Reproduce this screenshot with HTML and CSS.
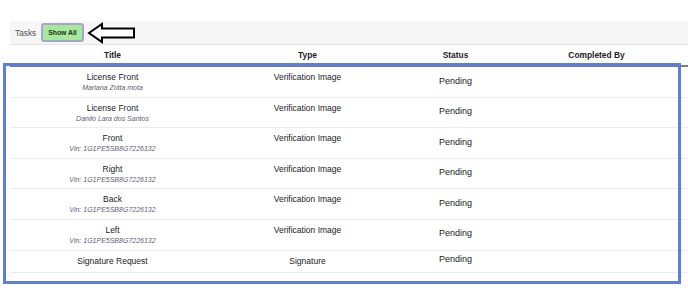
FILE: index.html
```html
<!DOCTYPE html>
<html lang="en">
<head>
  <meta charset="UTF-8" />
  <title>Tasks</title>
  <link rel="stylesheet" href="styles.css">
</head>
<body>
  <div class="page">
    <div class="toolbar">
      <span class="toolbar-label">Tasks</span>
      <button class="show-all">Show All</button>
      <svg class="arrow" width="49" height="22" viewBox="0 0 49 22">
        <path d="M2 11 L15 2 L15 6.5 L47 6.5 L47 15.5 L15 15.5 L15 20 Z" fill="#fff" stroke="#000" stroke-width="2" stroke-linejoin="miter" />
      </svg>
    </div>

    <table class="tasks">
      <colgroup>
        <col class="col-title">
        <col class="col-type">
        <col class="col-status">
        <col class="col-by">
      </colgroup>
      <thead>
        <tr>
          <th>Title</th>
          <th>Type</th>
          <th>Status</th>
          <th class="by">Completed By</th>
        </tr>
      </thead>
      <tbody>
        <tr>
          <td class="title">License Front<div class="sub">Mariana Zotta mota</div></td>
          <td class="type">Verification Image</td>
          <td class="status">Pending</td>
          <td class="by"></td>
        </tr>
        <tr>
          <td class="title">License Front<div class="sub">Danilo Lara dos Santos</div></td>
          <td class="type">Verification Image</td>
          <td class="status">Pending</td>
          <td class="by"></td>
        </tr>
        <tr>
          <td class="title">Front<div class="sub">Vin: 1G1PE5SB8G7226132</div></td>
          <td class="type">Verification Image</td>
          <td class="status">Pending</td>
          <td class="by"></td>
        </tr>
        <tr>
          <td class="title">Right<div class="sub">Vin: 1G1PE5SB8G7226132</div></td>
          <td class="type">Verification Image</td>
          <td class="status">Pending</td>
          <td class="by"></td>
        </tr>
        <tr>
          <td class="title">Back<div class="sub">Vin: 1G1PE5SB8G7226132</div></td>
          <td class="type">Verification Image</td>
          <td class="status">Pending</td>
          <td class="by"></td>
        </tr>
        <tr>
          <td class="title">Left<div class="sub">Vin: 1G1PE5SB8G7226132</div></td>
          <td class="type">Verification Image</td>
          <td class="status">Pending</td>
          <td class="by"></td>
        </tr>
        <tr class="short">
          <td class="title">Signature Request</td>
          <td class="type">Signature</td>
          <td class="status">Pending</td>
          <td class="by"></td>
        </tr>
      </tbody>
    </table>

    <div class="highlight"></div>
  </div>
</body>
</html>
```

FILE: styles.css
```css
body {
  margin: 0;
  background-color: #fff;
  font-family: 'Liberation Sans', Arial, sans-serif;
  color: #222;
  overflow: hidden;
}

.page {
  position: relative;
  height: 293px;
  padding: 21px 0 0 10px;
  box-sizing: border-box;
}

.toolbar {
  display: flex;
  align-items: center;
  height: 23px;
  padding-left: 5px;
  background-color: #f6f6f6;
  border-bottom: 1px solid #e6e6e6;
}

.toolbar-label {
  font-size: 8.3px;
  color: #555;
}

.show-all {
  margin-left: 5px;
  height: 19px;
  padding: 0 5px;
  font-family: inherit;
  font-size: 6.8px;
  font-weight: 700;
  color: #1d3320;
  background-color: #a6e89c;
  border: 2px solid #aaa2d2;
  border-radius: 3px;
}

.arrow {
  display: block;
  margin-left: 3px;
  margin-top: 1px;
}

.tasks {
  width: 678px;
  table-layout: fixed;
  border-collapse: collapse;
}

.col-title { width: 205px; }
.col-type { width: 185px; }
.col-status { width: 111px; }
.col-by { width: 177px; }

.tasks th {
  height: 20px;
  padding: 0;
  font-size: 8.4px;
  font-weight: 700;
  text-align: center;
  border-bottom: 2px solid #7d7d7d;
}

.tasks th.by {
  padding-right: 6px;
}

.tasks td {
  padding: 5px 0 4px;
  font-size: 8.5px;
  line-height: 11px;
  text-align: center;
  vertical-align: top;
  border-bottom: 1px solid #ececec;
}

.tasks td.status {
  font-size: 9px;
  padding-top: 8.5px;
}

.tasks .short td {
  padding-bottom: 5px;
}

.tasks .short td.status {
  padding-top: 3px;
}

.sub {
  font-size: 7px;
  line-height: 9.6px;
  font-style: italic;
  color: #5e5c78;
}

.highlight {
  position: absolute;
  left: 3px;
  top: 63px;
  width: 672px;
  height: 215px;
  border: 3px solid #5b7fe0;
  pointer-events: none;
}
```
